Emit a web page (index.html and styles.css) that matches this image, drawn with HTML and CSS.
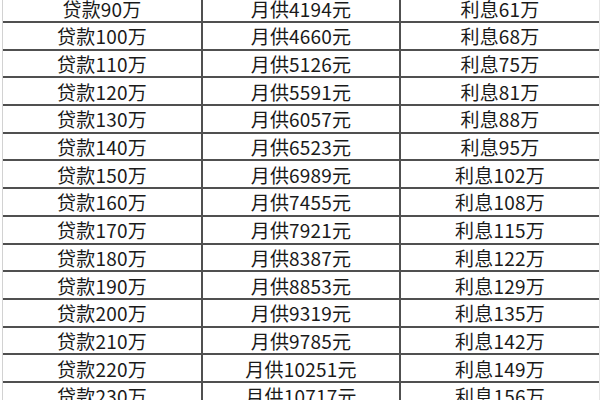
FILE: index.html
```html
<!DOCTYPE html>
<html lang="zh-CN">
<head>
<meta charset="utf-8">
<link rel="stylesheet" href="styles.css">
</head>
<body>
<div class="table">
  <div class="row"><div class="cell">贷款90万</div><div class="cell">月供4194元</div><div class="cell">利息61万</div></div>
  <div class="row"><div class="cell">贷款100万</div><div class="cell">月供4660元</div><div class="cell">利息68万</div></div>
  <div class="row"><div class="cell">贷款110万</div><div class="cell">月供5126元</div><div class="cell">利息75万</div></div>
  <div class="row"><div class="cell">贷款120万</div><div class="cell">月供5591元</div><div class="cell">利息81万</div></div>
  <div class="row"><div class="cell">贷款130万</div><div class="cell">月供6057元</div><div class="cell">利息88万</div></div>
  <div class="row"><div class="cell">贷款140万</div><div class="cell">月供6523元</div><div class="cell">利息95万</div></div>
  <div class="row"><div class="cell">贷款150万</div><div class="cell">月供6989元</div><div class="cell">利息102万</div></div>
  <div class="row"><div class="cell">贷款160万</div><div class="cell">月供7455元</div><div class="cell">利息108万</div></div>
  <div class="row"><div class="cell">贷款170万</div><div class="cell">月供7921元</div><div class="cell">利息115万</div></div>
  <div class="row"><div class="cell">贷款180万</div><div class="cell">月供8387元</div><div class="cell">利息122万</div></div>
  <div class="row"><div class="cell">贷款190万</div><div class="cell">月供8853元</div><div class="cell">利息129万</div></div>
  <div class="row"><div class="cell">贷款200万</div><div class="cell">月供9319元</div><div class="cell">利息135万</div></div>
  <div class="row"><div class="cell">贷款210万</div><div class="cell">月供9785元</div><div class="cell">利息142万</div></div>
  <div class="row"><div class="cell">贷款220万</div><div class="cell">月供10251元</div><div class="cell">利息149万</div></div>
  <div class="row"><div class="cell">贷款230万</div><div class="cell">月供10717元</div><div class="cell">利息156万</div></div>
</div>
</body>
</html>
```

FILE: styles.css
```css
html, body {
  margin: 0;
  padding: 0;
  background: #ffffff;
  overflow: hidden;
}
body {
  width: 600px;
  height: 400px;
  font-family: "Noto Sans CJK SC", "Noto Sans", sans-serif;
  color: #1a1a1a;
}
.table {
  margin-top: -4.7px;
  margin-left: 2px;
  width: 596px;
  border-left: 1px solid #d2d2d2;
  border-right: 1px solid #e6e6e6;
}
.row {
  display: grid;
  grid-template-columns: 198px 198px 1fr;
  height: 27.7px;
  box-sizing: border-box;
  border-bottom: 2px solid #505050;
}
.cell {
  display: flex;
  align-items: center;
  justify-content: center;
  font-size: 19px;
  letter-spacing: 0.2px;
  line-height: 1;
}
.cell + .cell {
  border-left: 2px solid #505050;
}
```
